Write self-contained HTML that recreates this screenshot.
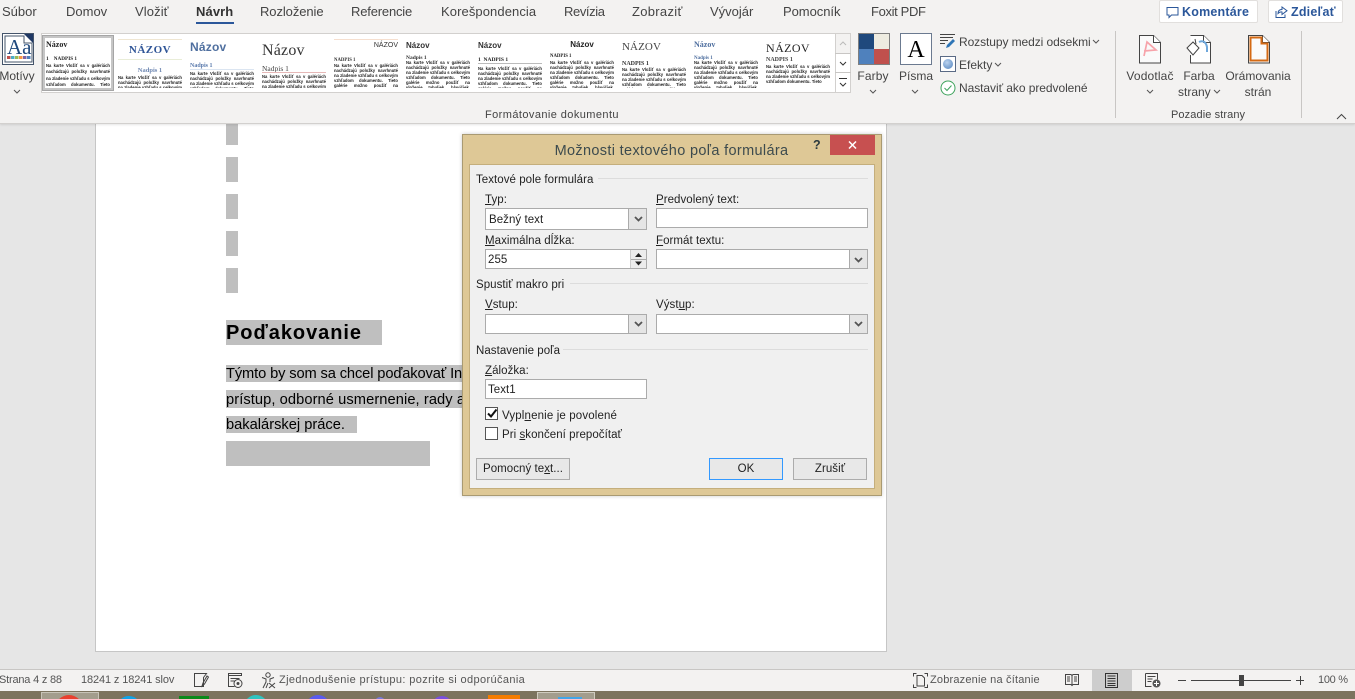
<!DOCTYPE html>
<html lang="sk"><head><meta charset="utf-8"><title>Návrh</title>
<style>
html,body{margin:0;padding:0;width:1355px;height:699px;overflow:hidden;background:#e6e6e6}
body{position:relative;font-family:"Liberation Sans",sans-serif;color:#333}
div,span.a,svg{position:absolute}
.t{position:absolute;white-space:nowrap;line-height:16px;height:16px}
.tab{font-size:13px;letter-spacing:0;color:#444;top:4px}
.r{font-size:12px;letter-spacing:0;color:#444}
.c{transform:translateX(-50%)}
.g{position:absolute;top:35px;width:64px;height:53px;overflow:hidden;font-family:"Liberation Serif",serif;color:#222}
.g div{white-space:nowrap}
.g .b{white-space:normal;left:0;right:0;font-weight:bold;font-size:4.2px;line-height:5px;text-align:justify;color:#222;font-family:"Liberation Sans",sans-serif}
.d{font-size:11.5px;letter-spacing:.05px;color:#222}
.d u{text-decoration:underline}
.line{position:absolute;height:1px;background:#dcdcdc}
.in{position:absolute;background:#fff;border:1px solid #ababab;box-sizing:border-box}
.dd{position:absolute;right:0;top:0;bottom:0;width:18px;background:#e5e5e5;border-left:1px solid #ababab;box-sizing:border-box}
.btn{position:absolute;top:458px;height:22px;box-sizing:border-box;border:1px solid #acacac;background:#e8e8e8;text-align:center;line-height:20px;font-size:11.5px;letter-spacing:.05px;color:#222}
.hl{position:absolute;background:#bfbfbf}
.st{font-size:11px;letter-spacing:.38px;color:#555;top:672px}
.ch{position:absolute;width:8px;height:5px}
</style></head><body>

<!-- document area -->
<div style="left:95px;top:124px;width:792px;height:528px;background:#fff;border-left:1px solid #c6c6c6;border-right:1px solid #c6c6c6;border-bottom:1px solid #c6c6c6;box-sizing:border-box"></div>
<div class="hl" style="left:226px;top:124px;width:12px;height:21px"></div>
<div class="hl" style="left:226px;top:157px;width:12px;height:25px"></div>
<div class="hl" style="left:226px;top:194px;width:12px;height:25px"></div>
<div class="hl" style="left:226px;top:231px;width:12px;height:25px"></div>
<div class="hl" style="left:226px;top:268px;width:12px;height:25px"></div>
<div class="hl" style="left:226px;top:320px;width:156px;height:25px"></div>
<div class="t" style="left:226px;top:324px;font-size:20px;font-weight:bold;letter-spacing:.95px;color:#000;line-height:18px;height:18px">Poďakovanie</div>
<div class="hl" style="left:226px;top:365px;width:240px;height:17px"></div>
<div class="hl" style="left:226px;top:390px;width:240px;height:18px"></div>
<div class="hl" style="left:226px;top:416px;width:131px;height:17px"></div>
<div class="hl" style="left:226px;top:441px;width:204px;height:25px"></div>
<div class="t" style="left:226px;top:366px;font-size:14.67px;color:#000;letter-spacing:-.12px;width:238px;overflow:hidden">Týmto by som sa chcel poďakovať Ing</div>
<div class="t" style="left:226px;top:392px;font-size:14.67px;color:#000;letter-spacing:.08px;width:238px;overflow:hidden">prístup, odborné usmernenie, rady a</div>
<div class="t" style="left:226px;top:417px;font-size:14.67px;color:#000">bakalárskej práce.</div>

<!-- ribbon -->
<div style="left:0;top:0;width:1355px;height:123px;background:#f3f2f1;border-bottom:1px solid #d2d0ce;box-shadow:0 1px 2px rgba(0,0,0,.1)"></div>
<div class="t tab" style="left:2px">Súbor</div>
<div class="t tab" style="left:66px">Domov</div>
<div class="t tab" style="left:135px;letter-spacing:.1px">Vložiť</div>
<div class="t tab" style="left:196px;font-weight:bold;letter-spacing:.1px;color:#333">Návrh</div>
<div style="left:196px;top:22px;width:38px;height:2px;background:#2b579a"></div>
<div class="t tab" style="left:260px;letter-spacing:-.08px">Rozloženie</div>
<div class="t tab" style="left:351px;letter-spacing:-.18px">Referencie</div>
<div class="t tab" style="left:441px;letter-spacing:.09px">Korešpondencia</div>
<div class="t tab" style="left:564px;letter-spacing:-.4px">Revízia</div>
<div class="t tab" style="left:632px;letter-spacing:.3px">Zobraziť</div>
<div class="t tab" style="left:710px">Vývojár</div>
<div class="t tab" style="left:783px;letter-spacing:-.05px">Pomocník</div>
<div class="t tab" style="left:871px;letter-spacing:-.35px">Foxit PDF</div>

<!-- comment / share -->
<div style="left:1159px;top:0;width:99px;height:23px;background:#fff;border:1px solid #e1dfdd;box-sizing:border-box;border-radius:2px"></div>
<svg style="left:1166px;top:6px" width="13" height="13" viewBox="0 0 13 13"><path d="M1 1.500h11v7.500H5.500L3 11.500V9H1z" fill="none" stroke="#2b579a"/></svg>
<div class="t" style="left:1182px;top:4px;font-size:12.5px;font-weight:bold;color:#2b579a;letter-spacing:.2px">Komentáre</div>
<div style="left:1268px;top:0;width:75px;height:23px;background:#fff;border:1px solid #e1dfdd;box-sizing:border-box;border-radius:2px"></div>
<svg style="left:1275px;top:5px" width="13" height="14" viewBox="0 0 13 14"><path d="M7 2v2.500C4 4.500 3 6.500 3 8.500 4.500 7 6 6.800 7 7v2.500L12 5.700z" fill="none" stroke="#2b579a"/><path d="M1 6v6.500h9V9.500" fill="none" stroke="#2b579a"/></svg>
<div class="t" style="left:1291px;top:4px;font-size:12.5px;font-weight:bold;color:#2b579a;letter-spacing:.2px">Zdieľať</div>

<!-- Motivy -->
<div style="left:2px;top:33px;width:32px;height:32px;background:#fff;border:1px solid #44546a;box-sizing:border-box"></div>
<svg style="left:2px;top:33px" width="32" height="32" viewBox="0 0 32 32"><path d="M22 1h9v9z" fill="#1f3864"/><path d="M3 3h19v7h8v19H3z" fill="none" stroke="#44546a" stroke-width="1"/>
<rect x="5" y="23" width="3.500" height="3" fill="#c0504d"/><rect x="9" y="23" width="3.500" height="3" fill="#4bacc6"/><rect x="13" y="23" width="3.500" height="3" fill="#9bbb59"/><rect x="17" y="23" width="3.500" height="3" fill="#f79646"/><rect x="21" y="23" width="3.500" height="3" fill="#8064a2"/><rect x="25" y="23" width="3.500" height="3" fill="#4f81bd"/></svg>
<div class="t" style="left:7px;top:38px;font:21px/18px 'Liberation Serif',serif;color:#1f497d;height:18px">Aa</div>
<div class="t r c" style="left:17px;top:68px">Motívy</div>
<svg class="ch" style="left:13px;top:89px" viewBox="0 0 8 5"><path d="M1 1l3 3 3-3" fill="none" stroke="#555"/></svg>

<!-- gallery -->
<div style="left:41px;top:33px;width:810px;height:60px;background:#fff;border:1px solid #d2d0ce;box-sizing:border-box"></div>
<div style="left:42px;top:35px;width:72px;height:56px;box-sizing:border-box;border:3px solid #c6c6c6;outline:1px solid #a6a6a6;outline-offset:-1px"></div>

<div class="g" style="left:46px;width:64px"><div style="top:5px;font-size:8px;font-weight:bold">Názov</div><div style="top:21px;font-size:5.200px;font-weight:bold">1 &nbsp; &nbsp;NADPIS 1</div><div class="b" style="top:28px;line-height:6.4px">Na karte Vložiť sa v galériách nachádzajú položky navrhnuté na zladenie vzhľadu s celkovým vzhľadom dokumentu. Tieto galérie možno použiť</div></div>

<div class="g" style="left:118px">
<div style="top:4px;left:0;right:0;height:1px;background:#efe6d2"></div>
<div style="top:9px;left:0;right:0;text-align:center;font-size:11px;font-weight:bold;letter-spacing:.5px;color:#2f5597">NÁZOV</div>
<div style="top:24px;left:0;right:0;height:1px;background:#e9edd8"></div>
<div style="top:32px;left:0;right:0;text-align:center;font-size:6.500px;font-weight:bold;color:#6f88b2">Nadpis 1</div>
<div class="b" style="top:39.500px">Na karte Vložiť sa v galériách nachádzajú položky navrhnuté na zladenie vzhľadu s celkovým vzhľadom dokumentu.</div></div>

<div class="g" style="left:190px"><div style="top:5px;font-size:12px;font-weight:bold;letter-spacing:.2px;color:#4f6f9f;font-family:'Liberation Sans'">Názov</div>
<div style="top:28px;font-size:6px;font-weight:bold;color:#5b7bad">Nadpis 1</div><div style="top:34px;left:0;right:0;height:1px;background:#dbe5f1"></div>
<div class="b" style="top:33.500px;margin-top:2px">Na karte Vložiť sa v galériách nachádzajú položky navrhnuté na zladenie vzhľadu s celkovým vzhľadom dokumentu. Tieto galérie možno použiť na vloženie tabuliek</div></div>

<div class="g" style="left:262px"><div style="top:7px;font-size:16px;color:#333;letter-spacing:.2px">Názov</div>
<div style="top:29px;font-size:7.500px;color:#444">Nadpis 1</div><div style="top:37px;left:0;right:0;height:1px;background:#e6b8b7"></div>
<div class="b" style="top:39px">Na karte Vložiť sa v galériách nachádzajú položky navrhnuté na zladenie vzhľadu s celkovým vzhľadom</div></div>

<div class="g" style="left:334px"><div style="top:4px;left:0;right:0;height:1px;background:#f5dfcf"></div>
<div style="top:7px;right:0;font-size:7px;color:#333;font-family:'Liberation Sans'">NÁZOV</div>
<div style="top:23px;font-size:4.800px;font-weight:bold;color:#333">NADPIS 1</div>
<div class="b" style="top:27.500px">Na karte Vložiť sa v galériách nachádzajú položky navrhnuté na zladenie vzhľadu s celkovým vzhľadom dokumentu. Tieto galérie možno použiť na vloženie tabuliek, hlavičiek, piät, zoznamov, úvodných strán a ostatných</div></div>

<div class="g" style="left:406px"><div style="top:6px;font-size:8px;font-weight:bold;color:#333;font-family:'Liberation Sans'">Názov</div>
<div style="top:20px;font-size:5.500px;color:#333;font-weight:bold">Nadpis 1</div>
<div class="b" style="top:25px">Na karte Vložiť sa v galériách nachádzajú položky navrhnuté na zladenie vzhľadu s celkovým vzhľadom dokumentu. Tieto galérie možno použiť na vloženie tabuliek, hlavičiek, piät, zoznamov, úvodných strán a ostatných</div></div>

<div class="g" style="left:478px"><div style="top:6px;font-size:8px;color:#333;font-weight:bold;font-family:'Liberation Sans'">Názov</div>
<div style="top:22px;font-size:5.500px;font-weight:bold;color:#222">1 &nbsp;NADPIS 1</div><div style="top:28px;left:0;right:0;height:1px;background:#bbb"></div>
<div class="b" style="top:30.500px">Na karte Vložiť sa v galériách nachádzajú položky navrhnuté na zladenie vzhľadu s celkovým vzhľadom dokumentu. Tieto galérie možno použiť na vloženie</div></div>

<div class="g" style="left:550px"><div style="top:5px;left:0;right:0;text-align:center;font-size:8px;font-weight:bold;color:#222;font-family:'Liberation Sans'">Názov</div>
<div style="top:19px;font-size:4.800px;font-weight:bold;color:#222">NADPIS 1</div>
<div class="b" style="top:24.500px">Na karte Vložiť sa v galériách nachádzajú položky navrhnuté na zladenie vzhľadu s celkovým vzhľadom dokumentu. Tieto galérie možno použiť na vloženie tabuliek, hlavičiek, piät, zoznamov, úvodných strán a ostatných</div></div>

<div class="g" style="left:622px"><div style="top:6px;font-size:11px;color:#444;letter-spacing:.1px">NÁZOV</div>
<div style="top:26px;font-size:6px;font-weight:bold;color:#333">NADPIS 1</div>
<div class="b" style="top:31.500px">Na karte Vložiť sa v galériách nachádzajú položky navrhnuté na zladenie vzhľadu s celkovým vzhľadom dokumentu. Tieto galérie možno použiť na vloženie</div></div>

<div class="g" style="left:694px"><div style="top:5px;font-size:8px;color:#4f6f9f;font-weight:bold">Názov</div>
<div style="top:21px;font-size:5px;font-weight:bold;color:#4f6f9f">Nadpis 1</div>
<div class="b" style="top:24.500px">Na karte Vložiť sa v galériách nachádzajú položky navrhnuté na zladenie vzhľadu s celkovým vzhľadom dokumentu. Tieto galérie možno použiť na vloženie tabuliek, hlavičiek, piät, zoznamov, úvodných strán a ostatných</div></div>

<div class="g" style="left:766px"><div style="top:6px;font-size:12px;color:#222;letter-spacing:.4px">NÁZOV</div>
<div style="top:22px;font-size:6px;font-weight:bold;color:#444">NADPIS 1</div>
<div class="b" style="top:28.500px">Na karte Vložiť sa v galériách nachádzajú položky navrhnuté na zladenie vzhľadu s celkovým vzhľadom dokumentu. Tieto</div></div>

<!-- gallery scroll -->
<div style="left:835px;top:33px;width:16px;height:60px;background:#f3f2f1;border:1px solid #d2d0ce;box-sizing:border-box"></div>
<div style="left:835px;top:53px;width:16px;height:1px;background:#c8c6c4"></div>
<div style="left:835px;top:72px;width:16px;height:1px;background:#c8c6c4"></div>
<div style="left:836px;top:54px;width:14px;height:18px;background:#fff"></div>
<div style="left:836px;top:73px;width:14px;height:19px;background:#fff"></div>
<svg class="ch" style="left:839px;top:41px" viewBox="0 0 8 5"><path d="M1 4l3-3 3 3" fill="none" stroke="#bbb"/></svg>
<svg class="ch" style="left:839px;top:61px" viewBox="0 0 8 5"><path d="M1 1l3 3 3-3" fill="none" stroke="#333"/></svg>
<div style="left:839px;top:78px;width:8px;height:1px;background:#333"></div>
<svg class="ch" style="left:839px;top:82px" viewBox="0 0 8 5"><path d="M1 1l3 3 3-3" fill="none" stroke="#333"/></svg>

<!-- Farby -->
<div style="left:858px;top:33px;width:32px;height:32px;box-sizing:border-box;border:1px solid #7f7f7f;background:#7f7f7f"></div>
<div style="left:859px;top:34px;width:15px;height:15px;background:#1f497d"></div>
<div style="left:874px;top:34px;width:15px;height:15px;background:#eeece1"></div>
<div style="left:859px;top:49px;width:15px;height:15px;background:#4f81bd"></div>
<div style="left:874px;top:49px;width:15px;height:15px;background:#c0504d"></div>
<div class="t r c" style="left:873px;top:68px;letter-spacing:.1px">Farby</div>
<svg class="ch" style="left:869px;top:89px" viewBox="0 0 8 5"><path d="M1 1l3 3 3-3" fill="none" stroke="#555"/></svg>

<!-- Pisma -->
<div style="left:900px;top:33px;width:32px;height:32px;box-sizing:border-box;border:1px solid #6b7a90;background:#fff"></div>
<div class="t c" style="left:916px;top:38px;font:24px/24px 'Liberation Serif',serif;color:#000;height:24px">A</div>
<div class="t r c" style="left:916px;top:68px">Písma</div>
<svg class="ch" style="left:911px;top:89px" viewBox="0 0 8 5"><path d="M1 1l3 3 3-3" fill="none" stroke="#555"/></svg>

<!-- right list -->
<svg style="left:940px;top:33px" width="17" height="17" viewBox="0 0 17 17"><path d="M0 1.500h15M0 4.500h13M0 7.500h8M0 10.500h5" stroke="#444" fill="none"/><path d="M6 15l1-3 6-6 2 2-6 6z" fill="#2e75b6"/></svg>
<div class="t r" style="left:959px;top:34px;letter-spacing:-.08px">Rozstupy medzi odsekmi</div>
<svg class="ch" style="left:1092px;top:39px" viewBox="0 0 8 5"><path d="M1 1l3 3 3-3" fill="none" stroke="#555"/></svg>
<div style="left:940px;top:56px;width:16px;height:16px;box-sizing:border-box;border:1px solid #5a6a85;background:#fff"></div>
<div style="left:943px;top:59px;width:10px;height:10px;border-radius:50%;background:radial-gradient(circle at 40% 35%,#bcd3ef,#4f81bd)"></div>
<div class="t r" style="left:959px;top:57px">Efekty</div>
<svg class="ch" style="left:994px;top:62px" viewBox="0 0 8 5"><path d="M1 1l3 3 3-3" fill="none" stroke="#555"/></svg>
<svg style="left:940px;top:80px" width="16" height="16" viewBox="0 0 16 16"><circle cx="8" cy="8" r="7" fill="#fff" stroke="#3ea35c"/><path d="M4.500 8l2.500 2.500L11.500 5.500" fill="none" stroke="#3ea35c"/></svg>
<div class="t r" style="left:959px;top:80px;letter-spacing:-.06px">Nastaviť ako predvolené</div>

<div style="left:1115px;top:31px;width:1px;height:87px;background:#c8c6c4"></div>
<div style="left:1301px;top:31px;width:1px;height:87px;background:#c8c6c4"></div>

<!-- page background icons -->
<svg style="left:1139px;top:35px" width="22" height="29" viewBox="0 0 22 29"><path d="M.5.500h14l7 7v20.500H.5z" fill="#fafafa" stroke="#444"/><path d="M14.500.500v7h7" fill="#fff" stroke="#444"/><path d="M5 21L8 7l9 8-12 1" fill="none" stroke="#f7a3aa" stroke-width="1.700"/></svg>
<svg style="left:1186px;top:35px" width="25" height="29" viewBox="0 0 25 29"><path d="M4.500.500h13l7 7v20.500h-20V20" fill="#fff" stroke="#444"/><path d="M17.500.500v7h7" fill="#fff" stroke="#444"/><path d="M1 13l6-6 6 6-6 7z" fill="#fff" stroke="#444"/><path d="M9 4l1 5" stroke="#444" fill="none"/><path d="M13 7c4-2 7 0 8 5v5" stroke="#6fa8dc" stroke-width="2" fill="none"/></svg>
<svg style="left:1248px;top:35px" width="22" height="29" viewBox="0 0 22 29"><path d="M.5.500h14l7 7v20.500H.5z" fill="#fafafa" stroke="#444"/><path d="M14.500.500v7h7" fill="#fff" stroke="#444"/><path d="M2.500 2.500h11v6h6v17h-17z" fill="none" stroke="#d46a14" stroke-width="2"/></svg>

<div class="t r c" style="left:1150px;top:68px;letter-spacing:.15px">Vodotlač</div>
<svg class="ch" style="left:1146px;top:89px" viewBox="0 0 8 5"><path d="M1 1l3 3 3-3" fill="none" stroke="#555"/></svg>
<div class="t r c" style="left:1199px;top:68px">Farba</div>
<div class="t r" style="left:1178px;top:84px">strany</div>
<svg class="ch" style="left:1213px;top:89px" viewBox="0 0 8 5"><path d="M1 1l3 3 3-3" fill="none" stroke="#555"/></svg>
<div class="t r c" style="left:1258px;top:68px">Orámovania</div>
<div class="t r c" style="left:1258px;top:84px">strán</div>
<div class="t r" style="left:485px;top:107px;font-size:11px;letter-spacing:.42px">Formátovanie dokumentu</div>
<div class="t r" style="left:1171px;top:107px;font-size:11px;letter-spacing:.1px">Pozadie strany</div>
<svg style="left:1336px;top:113px" width="11" height="7" viewBox="0 0 11 7"><path d="M1 6l4.500-4.500L10 6" fill="none" stroke="#444"/></svg>

<!-- dialog -->
<div style="left:462px;top:134px;width:420px;height:362px;box-sizing:border-box;background:#dec896;border:1px solid #a99a72;box-shadow:0 0 4px rgba(0,0,0,.2)"></div>
<div style="left:830px;top:135px;width:45px;height:20px;background:#c75050"></div>
<svg style="left:848px;top:141px" width="9" height="8" viewBox="0 0 9 8"><path d="M1 .5l7 7M8 .5l-7 7" stroke="#fff" stroke-width="1.500" fill="none"/></svg>
<div class="t" style="left:813px;top:137px;font-size:12.500px;font-weight:bold;color:#2b3a3e">?</div>
<div class="t c" style="left:671.500px;top:143px;font-size:14.500px;letter-spacing:.34px;color:#3d4b4e">Možnosti textového poľa formulára</div>
<div style="left:469px;top:164px;width:406px;height:325px;box-sizing:border-box;background:#f0f0f0;border:1px solid #c4ae7c"></div>

<div class="t d" style="left:476px;top:172px">Textové pole formulára</div>
<div class="line" style="left:598px;top:178px;width:270px"></div>
<div class="t d" style="left:485px;top:192px"><u>T</u>yp:</div>
<div class="t d" style="left:656px;top:192px"><u>P</u>redvolený text:</div>
<div class="in" style="left:485px;top:208px;width:162px;height:22px;border-width:1px"><div class="dd"></div></div>
<svg class="ch" style="left:634px;top:216px;width:9px;height:6px" viewBox="0 0 9 6"><path d="M1 1l3.500 3.500L8 1" fill="none" stroke="#555" stroke-width="1.800"/></svg>
<div class="t d" style="left:489px;top:212px">Bežný text</div>
<div class="in" style="left:656px;top:208px;width:212px;height:20px"></div>

<div class="t d" style="left:485px;top:233px"><u>M</u>aximálna dĺžka:</div>
<div class="t d" style="left:656px;top:233px"><u>F</u>ormát textu:</div>
<div class="in" style="left:485px;top:249px;width:162px;height:20px"></div>
<div style="left:630px;top:250px;width:16px;height:18px;background:#ececec;border-left:1px solid #ccc;box-sizing:border-box"></div>
<div style="left:631px;top:259px;width:15px;height:1px;background:#aaa"></div>
<svg style="left:634px;top:252px" width="9" height="15" viewBox="0 0 9 15"><path d="M1 5l3.500-4L8 5zM1 9.500h7L4.500 13.500z" fill="#222"/></svg>
<div class="t d" style="left:488px;top:252px">255</div>
<div class="in" style="left:656px;top:249px;width:212px;height:20px"><div class="dd" style="width:18px"></div></div>
<svg class="ch" style="left:854px;top:257px;width:9px;height:6px" viewBox="0 0 9 6"><path d="M1 1l3.500 3.500L8 1" fill="none" stroke="#555" stroke-width="1.800"/></svg>

<div class="t d" style="left:476px;top:277px">Spustiť makro pri</div>
<div class="line" style="left:570px;top:283px;width:298px"></div>
<div class="t d" style="left:485px;top:297px"><u>V</u>stup:</div>
<div class="t d" style="left:656px;top:297px">Výst<u>u</u>p:</div>
<div class="in" style="left:485px;top:314px;width:162px;height:20px"><div class="dd"></div></div>
<svg class="ch" style="left:634px;top:321px;width:9px;height:6px" viewBox="0 0 9 6"><path d="M1 1l3.500 3.500L8 1" fill="none" stroke="#555" stroke-width="1.800"/></svg>
<div class="in" style="left:656px;top:314px;width:212px;height:20px"><div class="dd"></div></div>
<svg class="ch" style="left:854px;top:321px;width:9px;height:6px" viewBox="0 0 9 6"><path d="M1 1l3.500 3.500L8 1" fill="none" stroke="#555" stroke-width="1.800"/></svg>

<div class="t d" style="left:476px;top:343px">Nastavenie poľa</div>
<div class="line" style="left:563px;top:349px;width:305px"></div>
<div class="t d" style="left:485px;top:363px"><u>Z</u>áložka:</div>
<div class="in" style="left:485px;top:379px;width:162px;height:20px"></div>
<div class="t d" style="left:488px;top:382px">Text1</div>

<div style="left:485px;top:407px;width:13px;height:13px;box-sizing:border-box;background:#fff;border:1px solid #555"></div>
<svg style="left:486px;top:408px" width="12" height="11" viewBox="0 0 12 11"><path d="M2 5.500l3 3L10.500 1.500" fill="none" stroke="#111" stroke-width="2"/></svg>
<div class="t d" style="left:502px;top:408px;letter-spacing:.14px">Vypl<u>n</u>enie je povolené</div>
<div style="left:485px;top:427px;width:13px;height:13px;box-sizing:border-box;background:#fff;border:1px solid #555"></div>
<div class="t d" style="left:502px;top:427px">Pri <u>s</u>končení prepočítať</div>

<div class="btn" style="left:476px;width:94px">Pomocný te<u>x</u>t...</div>
<div class="btn" style="left:709px;width:74px;border-color:#3399ff">OK</div>
<div class="btn" style="left:793px;width:74px">Zrušiť</div>

<!-- status bar -->
<div style="left:0;top:669px;width:1355px;height:22px;background:#f3f2f1;border-top:1px solid #c8c6c4;box-sizing:border-box"></div>
<div class="t st" style="left:-1px;letter-spacing:-.2px">Strana 4 z 88</div>
<div class="t st" style="left:81px;letter-spacing:-.12px">18241 z 18241 slov</div>
<svg style="left:194px;top:673px" width="15" height="15" viewBox="0 0 15 15"><path d="M.5.500h12l-3 4v9h-9z" fill="none" stroke="#444"/><path d="M8 13l1-3 4-7 1.500 1-4 7z" fill="none" stroke="#444"/></svg>
<svg style="left:228px;top:673px" width="15" height="15" viewBox="0 0 15 15"><path d="M.5.500h13v2H.5zM.5 2.500v11h6M2.500 5.500h9M2.500 8h4" fill="none" stroke="#444"/><circle cx="10" cy="10.500" r="4" fill="none" stroke="#444"/><circle cx="10" cy="10.500" r="1.500" fill="#444"/></svg>
<svg style="left:261px;top:672px" width="15" height="17" viewBox="0 0 15 17"><circle cx="7" cy="3" r="2.200" fill="none" stroke="#444"/><path d="M1 5.500l4 1.500v3l-3 6M13 5.500l-4 1.500v3M7 11l-2 5" fill="none" stroke="#444"/><path d="M8 11l6 5M14 11l-6 5" stroke="#444" fill="none"/></svg>
<div class="t st" style="left:279px">Zjednodušenie prístupu: pozrite si odporúčania</div>
<svg style="left:913px;top:673px" width="15" height="15" viewBox="0 0 15 15"><path d="M.5 3.500v-3h3M11.500.500h3v3M14.500 11.500v3h-3M3.500 14.500h-3v-3" fill="none" stroke="#444"/><path d="M4 2.500h5l2.500 2.500v8H4z" fill="none" stroke="#444"/></svg>
<div class="t st" style="left:930px;letter-spacing:.19px">Zobrazenie na čítanie</div>
<svg style="left:1065px;top:673px" width="14" height="14" viewBox="0 0 14 14"><path d="M.5 1.500h5.500l1 1 1-1h5.500v10H8l-1 1-1-1H.5zM7 2.500v9M2 4h3M2 6h3M2 8h3M9 4h3M9 6h3M9 8h3" fill="none" stroke="#444"/></svg>
<div style="left:1092px;top:670px;width:40px;height:21px;background:#cdcdcd"></div>
<svg style="left:1105px;top:673px" width="13" height="15" viewBox="0 0 13 15"><path d="M.5.500h12v14H.5zM2.500 3h8M2.500 5.500h8M2.500 8h8M2.500 10.500h8M2.500 12.500h8" fill="none" stroke="#333"/></svg>
<svg style="left:1145px;top:673px" width="16" height="15" viewBox="0 0 16 15"><path d="M.5.500h12v6M.5.500v13h6M2.500 3.500h8M2.500 6h5M2.500 8.500h4" fill="none" stroke="#444"/><circle cx="11.500" cy="10.500" r="4" fill="#555"/><path d="M9 10.500h5M11.500 8v5" stroke="#fff"/></svg>
<div style="left:1178px;top:680px;width:8px;height:1px;background:#444"></div>
<div style="left:1191px;top:680px;width:100px;height:1px;background:#444"></div>
<div style="left:1239px;top:675px;width:5px;height:11px;background:#444"></div>
<div style="left:1296px;top:680px;width:8px;height:1px;background:#444"></div>
<div style="left:1300px;top:676px;width:1px;height:9px;background:#444"></div>
<div class="t st" style="left:1318px;letter-spacing:-.3px">100 %</div>

<!-- taskbar -->
<div style="left:0;top:691px;width:1355px;height:8px;background:#7c735e;overflow:hidden">
<div style="left:41px;top:1px;width:58px;height:8px;background:#a39d8d;border:1px solid #c8c4b8;box-sizing:border-box"></div>
<div style="left:55px;top:4px;width:28px;height:28px;border-radius:50%;background:#e8402f"></div>
<div style="left:117px;top:5px;width:24px;height:24px;border-radius:50%;background:#0fa3e8"></div>
<div style="left:179px;top:5px;width:30px;height:10px;background:#0a8a1a"></div>
<div style="left:244px;top:4px;width:24px;height:24px;border-radius:50%;background:#2fc4c0"></div>
<div style="left:306px;top:4px;width:24px;height:24px;border-radius:50%;background:#5a5aee"></div>
<div style="left:375px;top:6px;width:10px;height:10px;border-radius:50%;background:#7a7ad8"></div>
<div style="left:432px;top:5px;width:20px;height:20px;border-radius:50%;background:#7a4fe0"></div>
<div style="left:488px;top:4px;width:32px;height:10px;background:#f57c00"></div>
<div style="left:537px;top:1px;width:58px;height:8px;background:#a39d8d;border:1px solid #d0ccc0;box-sizing:border-box"></div>
<div style="left:558px;top:6px;width:24px;height:6px;background:#42a5e8"></div>
</div>
</body></html>
